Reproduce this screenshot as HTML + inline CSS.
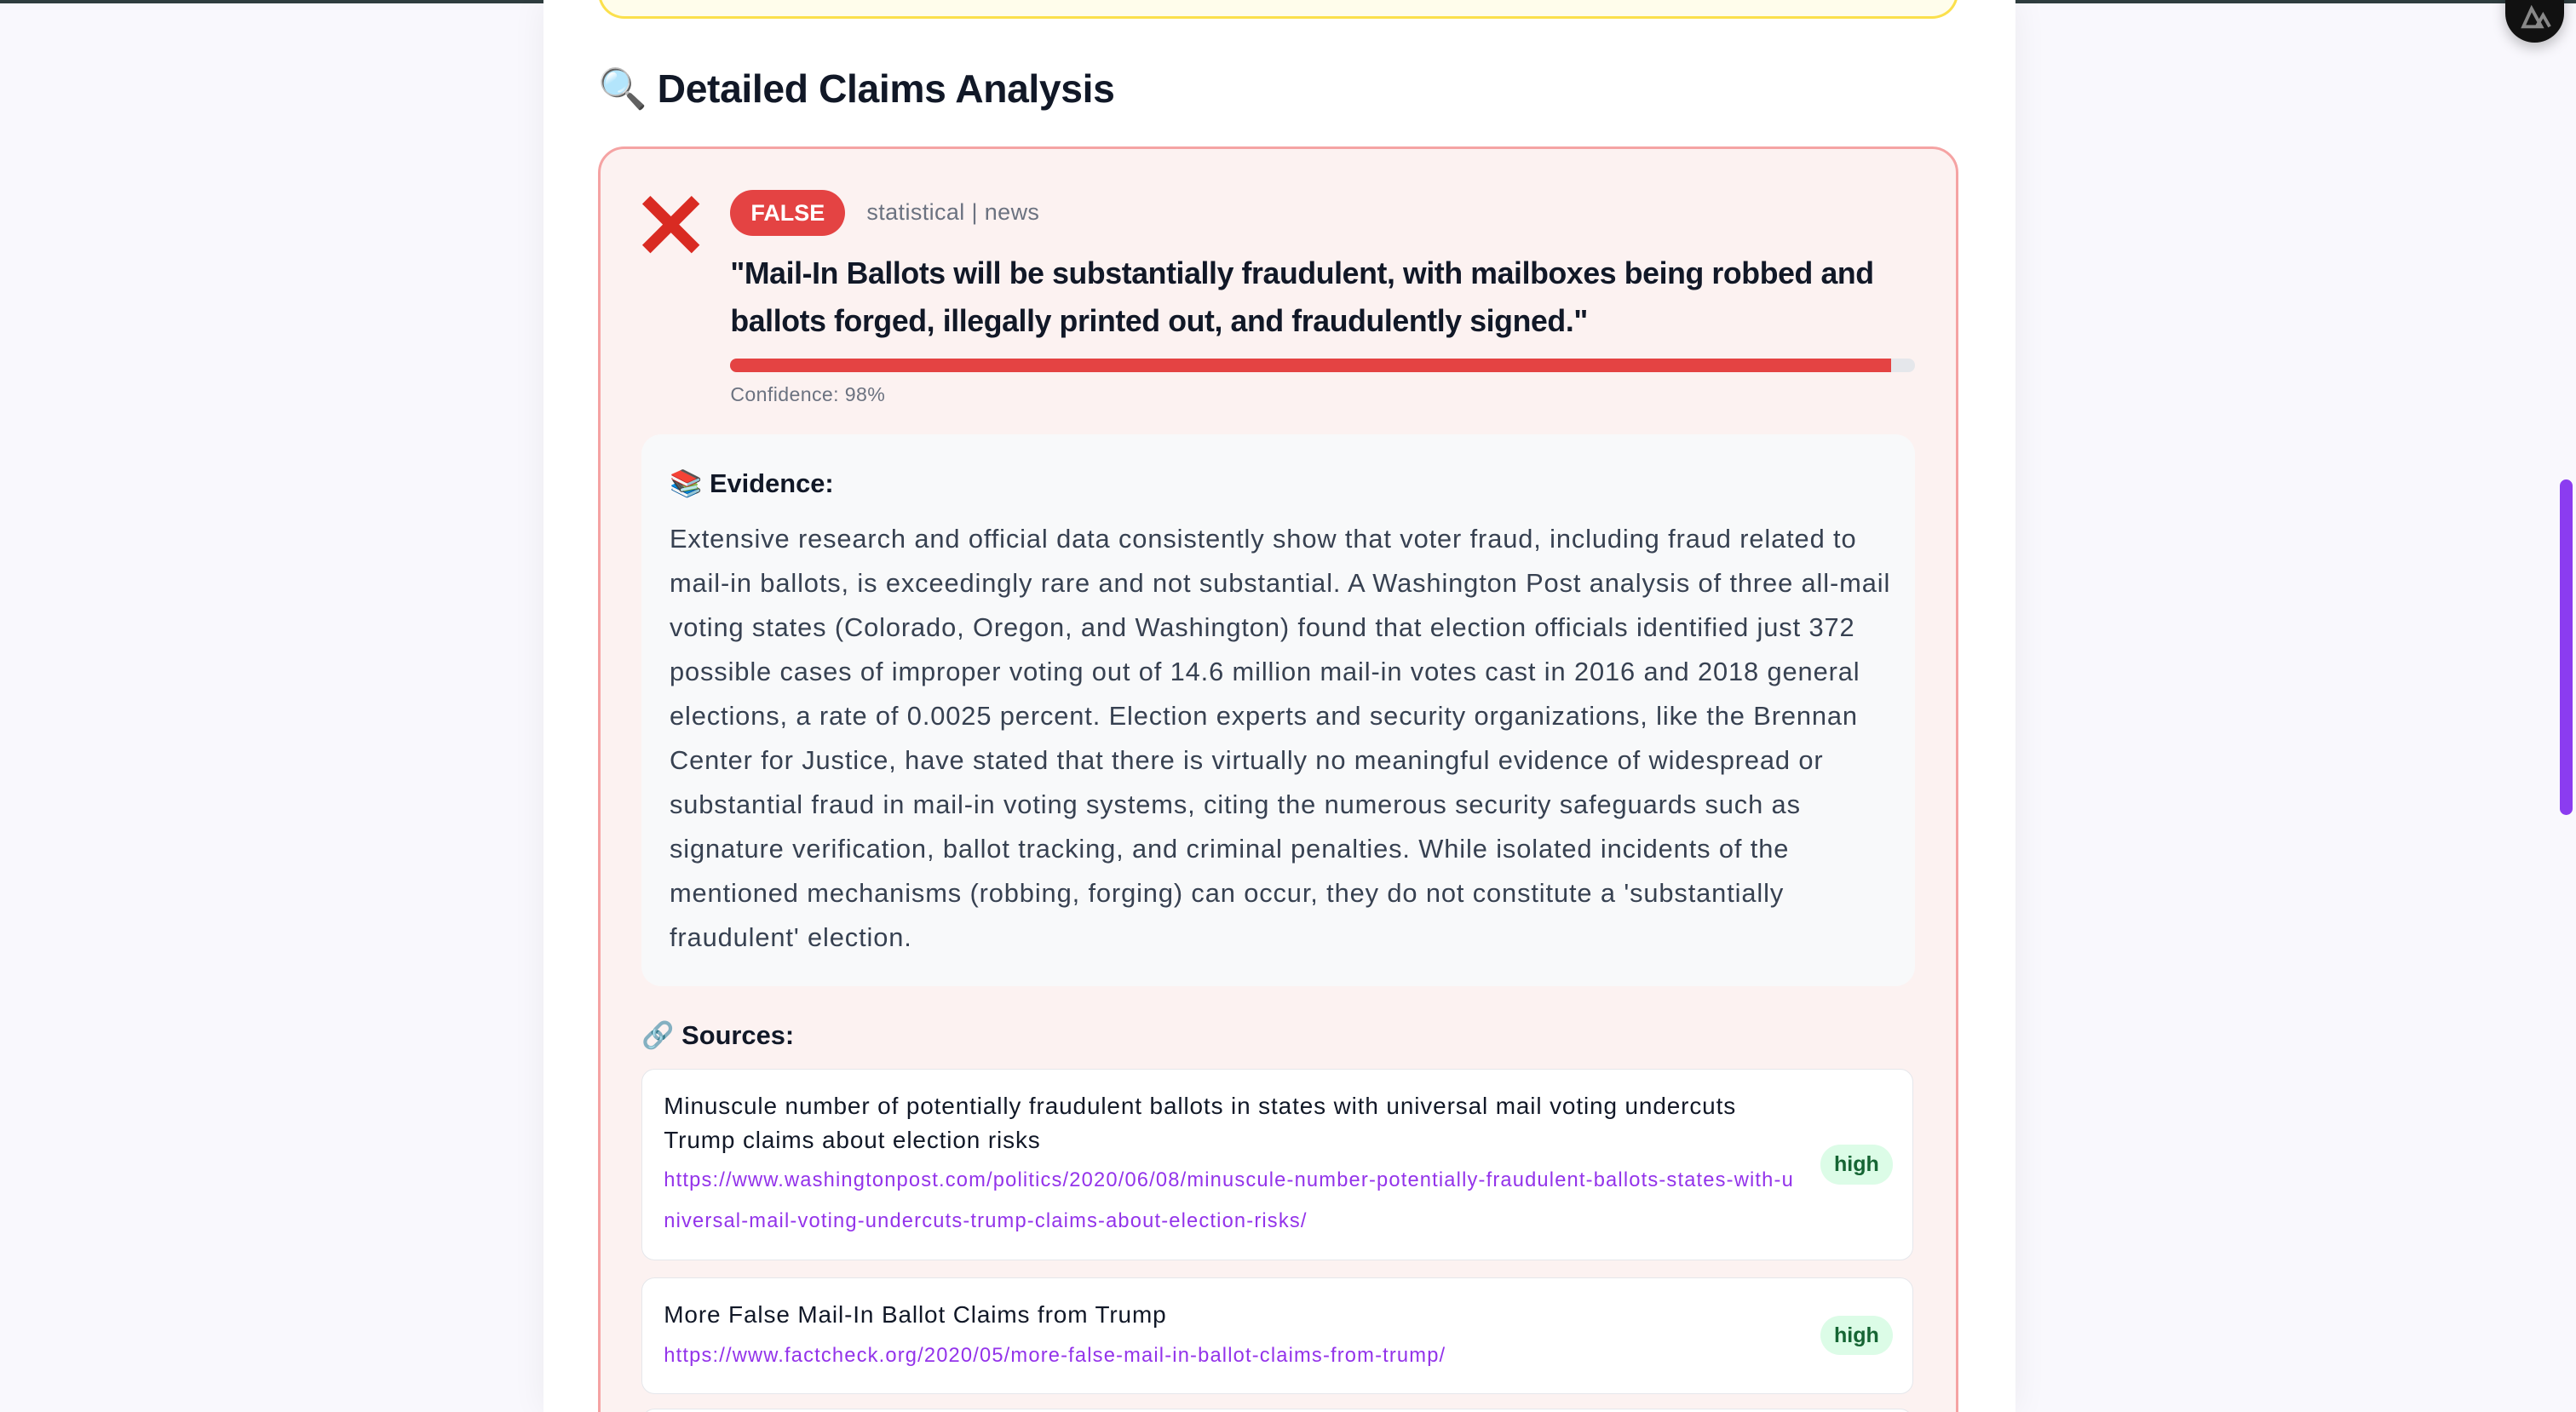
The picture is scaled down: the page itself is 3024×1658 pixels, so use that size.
<!DOCTYPE html>
<html><head><meta charset="utf-8"><style>
html,body{margin:0;padding:0;width:3024px;height:1658px;overflow:hidden}
#root{zoom:1.92857;width:1568px;height:860px;overflow:hidden;background:#f9f8fd;font-family:"Liberation Sans",sans-serif;position:relative}
.topbar{position:absolute;left:0;top:0;width:1568px;height:2px;background:#2f3d3f}
.page{position:absolute;left:331px;top:0;width:896px;height:860px;background:#fff;box-shadow:0 0 20px rgba(0,0,0,.06);overflow:hidden}
.yellow{position:absolute;left:33px;top:-20px;width:825px;height:30px;border:2px solid #fbe04c;border-top:none;border-radius:0 0 16px 16px;background:#fffdeb}
h2{position:absolute;left:33px;top:40px;margin:0;font-size:24px;font-weight:bold;color:#111827;letter-spacing:-0.2px}
.card{position:absolute;left:33px;top:89px;width:825px;height:800px;border:2px solid #f5a3a3;border-radius:16px;background:#fcf2f1}
.x{position:absolute;left:24px;top:27px}
.badge{position:absolute;left:79px;top:25px;width:70px;height:28px;border-radius:14px;background:#e44343;color:#fff;font-weight:bold;font-size:14px;text-align:center;line-height:28px}
.cat{position:absolute;left:162px;top:31px;font-size:14px;color:#6b7280;letter-spacing:0.2px}
.quote{position:absolute;left:79px;top:62px;width:740px;font-size:18.5px;font-weight:bold;line-height:29px;color:#111827;letter-spacing:-0.2px}
.bar{position:absolute;left:79px;top:128px;width:721px;height:8px;border-radius:4px;background:#e5e7eb;overflow:hidden}
.bar i{display:block;width:98%;height:100%;background:#e44343}
.conf{position:absolute;left:79px;top:143px;font-size:12px;color:#6b7280;letter-spacing:0.2px}
.ev{position:absolute;left:25px;top:174px;width:775px;height:336px;background:#f8f9fa;border-radius:12px}
.ev b{position:absolute;left:17px;top:20px;font-size:16px;color:#111827}
.ev p{position:absolute;left:17px;top:50px;margin:0;font-size:16px;line-height:27px;color:#374151;white-space:nowrap;letter-spacing:0.45px}
.srct{position:absolute;left:25px;top:530px;font-size:16px;font-weight:bold;color:#111827}
.src{position:absolute;left:25px;width:773px;background:#fff;border:1px solid #e5e7eb;border-radius:8px}
.src .t{position:absolute;left:13px;font-size:14.5px;line-height:21px;color:#111827;white-space:nowrap;letter-spacing:0.45px}
.src .u{position:absolute;left:13px;font-size:12.3px;line-height:25px;color:#9333ea;white-space:nowrap;letter-spacing:0.6px}
.hi{position:absolute;right:12px;width:44px;height:24px;border-radius:12px;background:#dcfce7;color:#166534;font-size:13px;font-weight:bold;text-align:center;line-height:24px}
.sb{position:absolute;left:1558px;top:292px;width:8px;height:204px;border-radius:4px;background:#8b3cf0}
.nuxt{position:absolute;left:1525px;top:-8px;width:36px;height:34px;border-radius:0 0 18px 18px;background:#111;box-shadow:0 3px 8px rgba(0,0,0,.25)}
</style></head><body><div id="root">
<div class="topbar"></div>
<div class="page">
<div class="yellow"></div>
<h2>🔍 Detailed Claims Analysis</h2>
<div class="card">
<svg class="x" width="38" height="38" viewBox="0 0 38 38"><path d="M4 4L34 34M34 4L4 34" stroke="#d92b22" stroke-width="7"/></svg>
<div class="badge">FALSE</div>
<div class="cat">statistical | news</div>
<div class="quote">"Mail-In Ballots will be substantially fraudulent, with mailboxes being robbed and ballots forged, illegally printed out, and fraudulently signed."</div>
<div class="bar"><i></i></div>
<div class="conf">Confidence: 98%</div>
<div class="ev"><b>📚 Evidence:</b><p>Extensive research and official data consistently show that voter fraud, including fraud related to<br>mail-in ballots, is exceedingly rare and not substantial. A Washington Post analysis of three all-mail<br>voting states (Colorado, Oregon, and Washington) found that election officials identified just 372<br>possible cases of improper voting out of 14.6 million mail-in votes cast in 2016 and 2018 general<br>elections, a rate of 0.0025 percent. Election experts and security organizations, like the Brennan<br>Center for Justice, have stated that there is virtually no meaningful evidence of widespread or<br>substantial fraud in mail-in voting systems, citing the numerous security safeguards such as<br>signature verification, ballot tracking, and criminal penalties. While isolated incidents of the<br>mentioned mechanisms (robbing, forging) can occur, they do not constitute a 'substantially<br>fraudulent' election.</p></div>
<div class="srct">🔗 Sources:</div>
<div class="src" style="top:560px;height:116px"><div class="t" style="top:12px">Minuscule number of potentially fraudulent ballots in states with universal mail voting undercuts<br>Trump claims about election risks</div><div class="u" style="top:55px">https://www.washingtonpost.com/politics/2020/06/08/minuscule-number-potentially-fraudulent-ballots-states-with-u<br>niversal-mail-voting-undercuts-trump-claims-about-election-risks/</div><div class="hi" style="top:46px">high</div></div>
<div class="src" style="top:687px;height:70px"><div class="t" style="top:12px">More False Mail-In Ballot Claims from Trump</div><div class="u" style="top:35px">https://www.factcheck.org/2020/05/more-false-mail-in-ballot-claims-from-trump/</div><div class="hi" style="top:23px">high</div></div>
<div class="src" style="top:767px;height:70px"></div>
</div>
</div>
<div class="nuxt"><svg width="36" height="34" viewBox="0 0 36 34"><path d="M11 24L16 13L22 24ZM19 24L23 17L27 24" fill="none" stroke="#888" stroke-width="2"/></svg></div>
<div class="sb"></div>
</div></body></html>
